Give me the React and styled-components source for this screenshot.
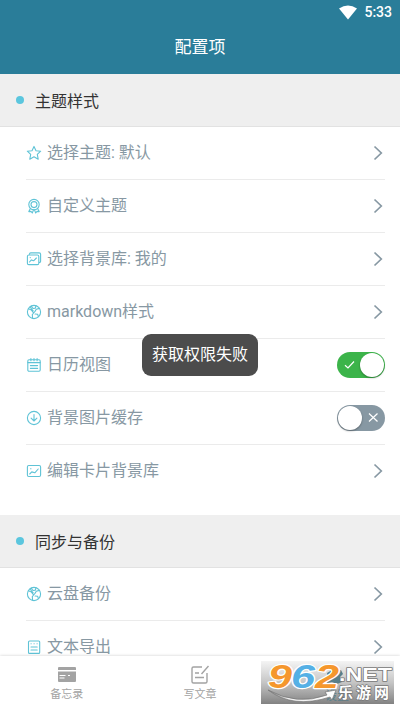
"use strict";

import React from "react";
import styled, { createGlobalStyle } from "styled-components";

const GlobalStyle = createGlobalStyle`
  * {
    box-sizing: border-box;
  }
  body {
    margin: 0;
    background: #fff;
    font-family: Roboto, "Noto Sans CJK SC", sans-serif;
    font-weight: 400;
    overflow: hidden;
  }
`;

const Screen = styled.div`
  position: relative;
  width: 400px;
  height: 710px;
  display: flex;
  flex-direction: column;
  overflow: hidden;
  background: #fff;
`;

const Header = styled.header`
  flex: none;
  height: 74px;
  background: #2a7d99;
  color: #fff;
`;

const StatusBar = styled.div`
  height: 24px;
  display: flex;
  justify-content: flex-end;
  align-items: center;
  gap: 7px;
  padding-right: 8px;
  font-size: 14px;
  font-weight: 500;
  line-height: 24px;
`;

const Title = styled.h1`
  margin: 0;
  font-size: 17px;
  font-weight: 400;
  line-height: 47px;
  text-align: center;
`;

const Content = styled.main`
  flex: 1;
  min-height: 0;
  overflow: hidden;
`;

const SectionTitle = styled.h2`
  height: 53px;
  margin: 0;
  padding-left: 16px;
  display: flex;
  align-items: center;
  gap: 11px;
  background: #efefef;
  border-bottom: 1px solid #e2e2e2;
  color: #333;
  font-size: 16px;
  font-weight: 400;

  &::before {
    content: "";
    width: 8px;
    height: 8px;
    border-radius: 50%;
    background: #5bc6de;
  }
`;

const List = styled.div`
  padding: 0 15px 17px 26px;
`;

const Row = styled.div`
  height: 53px;
  display: flex;
  align-items: center;
  border-bottom: 1px solid #ebebeb;
  color: #8798a3;
  font-size: 16px;
  line-height: 24px;

  &:last-child {
    border-bottom-color: transparent;
  }
`;

const RowIcon = styled.svg`
  width: 16px;
  height: 16px;
  margin-right: 5px;
  fill: none;
  stroke: #5fc3d6;
  stroke-width: 1.1;
  stroke-linecap: round;
  stroke-linejoin: round;
`;

const Label = styled.span`
  flex: 1;
  white-space: nowrap;
`;

const Arrow = styled.svg`
  width: 10px;
  height: 16px;
  margin-right: 2px;
  fill: none;
  stroke: #8798a3;
  stroke-width: 1.7;
`;

const SwitchTrack = styled.div`
  width: 48px;
  height: 26px;
  padding: 1px;
  display: flex;
  flex-direction: ${(props) => (props.$on ? "row" : "row-reverse")};
  align-items: center;
  justify-content: space-between;
  border-radius: 13px;
  background: ${(props) => (props.$on ? "#3cb44a" : "#8798a3")};
`;

const SwitchKnob = styled.div`
  width: 24px;
  height: 24px;
  border-radius: 50%;
  background: #fff;
  box-shadow: 0 1px 2px rgba(0, 0, 0, 0.35);
`;

const SwitchMark = styled.svg`
  width: 12px;
  height: 12px;
  margin: 0 5px;
  fill: none;
  stroke: #fff;
  stroke-width: 1.2;
`;

const Toast = styled.div`
  position: absolute;
  top: 334px;
  left: 142px;
  width: 116px;
  height: 42px;
  border-radius: 9px;
  background: #4c4c4c;
  color: #fff;
  font-size: 16px;
  line-height: 42px;
  text-align: center;
`;

const TabBar = styled.nav`
  flex: none;
  height: 54px;
  display: flex;
  background: #fff;
  box-shadow: 0 0 3px rgba(0, 0, 0, 0.2);
`;

const Tab = styled.div`
  flex: 1;
  display: flex;
  flex-direction: column;
  align-items: center;
  padding-top: 9px;
  color: ${(props) => (props.$active ? "#2a7d99" : "#a3a3a3")};
  font-size: 11px;
  line-height: 20px;
`;

const TabIcon = styled.svg`
  width: 20px;
  height: 20px;
`;

const Watermark = styled.svg`
  position: absolute;
  left: 261px;
  top: 661px;
  width: 133px;
  height: 43px;
`;

const icons = {
    star: <path d="M8 1.4 L10 5.7 L14.7 6.2 L11.3 9.4 L12.2 14.2 L8 11.8 L3.8 14.2 L4.7 9.4 L1.3 6.2 L6 5.7 Z" />,
    badge: (
        <>
            <circle cx="8" cy="6.6" r="5.2" />
            <circle cx="8" cy="6.6" r="3" />
            <path d="M4.4 10.6 L2.8 13.6 L5 13.4 L6.3 15 L7.5 11.9 M11.6 10.6 L13.2 13.6 L11 13.4 L9.7 15 L8.5 11.9" />
        </>
    ),
    album: (
        <>
            <path d="M3.5 3.2 V3 A1.2 1.2 0 0 1 4.7 1.9 H13.2 A1.4 1.4 0 0 1 14.6 3.3 V10.2 A1.2 1.2 0 0 1 13.4 11.4" />
            <rect x="1.4" y="4" width="11.4" height="9.6" rx="1.4" />
            <path d="M3.5 11 L5.4 8.9 L7.6 9.8 L10.4 7 M4.2 6.6 H4.3" />
        </>
    ),
    globe: (
        <>
            <circle cx="8" cy="8" r="6.6" />
            <path d="M2.4 4.7 L5.4 6.1 L7.6 9 L6.3 10.6 L6.6 14.2 M5.2 2.1 L7 4.5 L9.4 4.1 L9.9 1.8 M13.5 4.4 L10.3 5.3 L9 7.4 L7.6 9 M9.1 10 L11.6 10.2 L12.4 12.6 M4 3 L7.2 6.8" />
        </>
    ),
    calendar: (
        <>
            <rect x="1.8" y="2.8" width="12.4" height="11.4" rx="1.2" />
            <path d="M1.8 5.6 H14.2 M4.9 1.5 V3.8 M8 1.5 V3.8 M11.1 1.5 V3.8 M4.4 8.6 H11.6 M4.4 11.4 H11.6" />
        </>
    ),
    download: (
        <>
            <circle cx="8" cy="8" r="6.6" />
            <path d="M8 4.5 V11 M5.1 8.2 L8 11 L10.9 8.2" />
        </>
    ),
    image: (
        <>
            <rect x="1.4" y="2.5" width="13.2" height="11" rx="1.4" />
            <path d="M3.7 11 L5.8 8.9 L8.8 9.8 L12.2 6 M4.6 5.8 H5" />
        </>
    ),
    note: (
        <>
            <rect x="2.5" y="2" width="11.2" height="12.4" rx="1" />
            <path d="M5 4.8 H5.2 M8 4.8 H8.2 M11 4.8 H11.2 M5 8 H11.2 M5 11 H11.2" />
        </>
    ),
};

const themeRows = [
    { icon: "star", label: "选择主题: 默认" },
    { icon: "badge", label: "自定义主题" },
    { icon: "album", label: "选择背景库: 我的" },
    { icon: "globe", label: "markdown样式" },
    { icon: "calendar", label: "日历视图", on: true },
    { icon: "download", label: "背景图片缓存", on: false },
    { icon: "image", label: "编辑卡片背景库" },
];

const syncRows = [
    { icon: "globe", label: "云盘备份" },
    { icon: "note", label: "文本导出" },
];

const Switch = ({ on }) => (
    <SwitchTrack $on={on}>
        <SwitchMark viewBox="0 0 12 12">
            <path d={on ? "M2 6.2 L5 9 L11 2.5" : "M2 1.5 L10.5 9.5 M10.5 1.5 L2 9.5"} />
        </SwitchMark>
        <SwitchKnob />
    </SwitchTrack>
);

const SettingRow = ({ icon, label, on }) => (
    <Row>
        <RowIcon viewBox="0 0 16 16">{icons[icon]}</RowIcon>
        <Label>{label}</Label>
        {on === undefined ? (
            <Arrow viewBox="0 0 10 16">
                <path d="M1.5 1.5 L8.3 8 L1.5 14.5" />
            </Arrow>
        ) : (
            <Switch on={on} />
        )}
    </Row>
);

const Section = ({ title, rows }) => (
    <section>
        <SectionTitle>{title}</SectionTitle>
        <List>
            {rows.map((row) => (
                <SettingRow key={row.label} {...row} />
            ))}
        </List>
    </section>
);

const SiteMark = () => (
    <Watermark viewBox="0 0 133 43">
        <defs>
            <linearGradient id="shade" x1="0" y1="0" x2="0" y2="1">
                <stop offset="0" stopColor="#f2f2f2" stopOpacity="0.85" />
                <stop offset="0.5" stopColor="#bdbdbd" stopOpacity="0.88" />
                <stop offset="1" stopColor="#777" stopOpacity="0.92" />
            </linearGradient>
            <linearGradient id="swoosh" x1="0" y1="0" x2="1" y2="0">
                <stop offset="0" stopColor="#777" />
                <stop offset="0.3" stopColor="#eee" />
                <stop offset="1" stopColor="#fff" />
            </linearGradient>
        </defs>
        <rect width="133" height="43" fill="url(#shade)" />
        <path d="M66 12 l5 -3 l3 2 l6 -2 l2 4 l-3 3 l2 5 l-5 2 l-5 -2 l-5 1 l1 -5 Z" fill="#587f8b" />
        <text x="64" y="39" fontSize="12" fill="#587f8b">设置</text>
        <g
            fontFamily="Liberation Sans, sans-serif"
            fontSize="34"
            fontWeight="700"
            fontStyle="italic"
            stroke="#fff"
            strokeWidth="2.4"
            strokeLinejoin="round"
            paintOrder="stroke"
        >
            <text x="7" y="27" fill="#f5972d" textLength="24" lengthAdjust="spacingAndGlyphs">9</text>
            <text x="30" y="27" fill="#55b0e5" textLength="24" lengthAdjust="spacingAndGlyphs">6</text>
            <text x="54" y="27" fill="#f5972d" textLength="24" lengthAdjust="spacingAndGlyphs">2</text>
        </g>
        <path
            d="M7 29 Q36 45 66 34 L64 31 L75 29 L71 39 L69 36 Q32 48 7 29 Z"
            fill="url(#swoosh)"
            stroke="#777"
            strokeWidth="0.7"
        />
        <g fill="#fff" stroke="#777" strokeWidth="1.4" strokeLinejoin="round" paintOrder="stroke" fontWeight="700">
            <text
                x="78"
                y="20"
                fontFamily="Liberation Sans, sans-serif"
                fontSize="18"
                textLength="53"
                lengthAdjust="spacingAndGlyphs"
            >
                .NET
            </text>
            <text x="77" y="37" fontFamily="Noto Sans CJK SC, sans-serif" fontSize="15" textLength="51">
                乐游网
            </text>
        </g>
    </Watermark>
);

const App = () => (
    <>
        <GlobalStyle />
        <Screen>
            <Header>
                <StatusBar>
                    <svg width="18" height="15" viewBox="0 0 18 15">
                        <path d="M0 3.6 Q9 -2.8 18 3.6 L9 14.5 Z" fill="#fff" />
                    </svg>
                    5:33
                </StatusBar>
                <Title>配置项</Title>
            </Header>
            <Content>
                <Section title="主题样式" rows={themeRows} />
                <Section title="同步与备份" rows={syncRows} />
            </Content>
            <TabBar>
                <Tab>
                    <TabIcon viewBox="0 0 20 20">
                        <path d="M2 2 H18 Q19 2 19 3 V5 H1 V3 Q1 2 2 2 Z M1 6.5 H19 V16 Q19 17 18 17 H2 Q1 17 1 16 Z" fill="#a3a3a3" />
                        <path d="M2.5 10.5 H8.5 M11 10.5 H13 M2.5 13 H7.5" stroke="#fff" />
                    </TabIcon>
                    备忘录
                </Tab>
                <Tab>
                    <TabIcon viewBox="0 0 20 20" fill="none" stroke="#a3a3a3" strokeWidth="1.4">
                        <path d="M12 2 H3.5 Q2 2 2 3.5 V16.5 Q2 18 3.5 18 H15.5 Q17 18 17 16.5 V8 M18.5 1 L11.5 9 M5 8 H9 M5 12.5 H14" />
                    </TabIcon>
                    写文章
                </Tab>
                <Tab $active />
            </TabBar>
            <Toast>获取权限失败</Toast>
            <SiteMark />
        </Screen>
    </>
);

export default App;
